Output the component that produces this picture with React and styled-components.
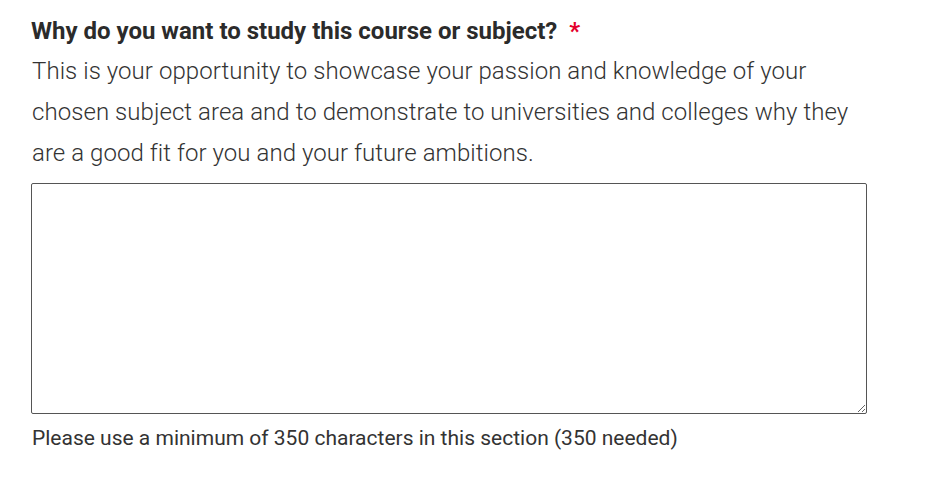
import React from "react";
import styled, { createGlobalStyle } from "styled-components";

const GlobalStyle = createGlobalStyle`
  html, body {
    margin: 0;
    padding: 0;
    background: #ffffff;
  }
  body {
    font-family: Roboto, "Liberation Sans", sans-serif;
    color: #333333;
  }
`;

const Field = styled.div`
  display: flex;
  flex-direction: column;
  padding: 16px 0 0 31px;
  width: 836px;
`;

const Label = styled.label`
  font-size: 24px;
  font-weight: 700;
  line-height: 30px;
  color: #2b2b2b;
`;

const Required = styled.span`
  color: #e4002b;
  margin-left: 12px;
`;

const Description = styled.p`
  margin: 5px 0 9px 1px;
  font-size: 24px;
  font-weight: 300;
  line-height: 41px;
  letter-spacing: 0.06px;
  color: #333333;
`;

const TextArea = styled.textarea`
  box-sizing: border-box;
  width: 836px;
  height: 231px;
  border: 1px solid #555555;
  border-radius: 2px;
  padding: 8px;
  font-family: inherit;
  font-size: 18px;
  resize: vertical;
  outline: none;
`;

const Hint = styled.div`
  margin: 11px 0 0 1px;
  font-size: 21px;
  font-weight: 400;
  line-height: 26px;
  color: #333333;
`;

const App = () => {
  return (
    <>
      <GlobalStyle />
      <Field>
        <Label>
          Why do you want to study this course or subject?
          <Required>*</Required>
        </Label>
        <Description>
          This is your opportunity to showcase your passion and knowledge of your
          chosen subject area and to demonstrate to universities and colleges why they
          are a good fit for you and your future ambitions.
        </Description>
        <TextArea />
        <Hint>Please use a minimum of 350 characters in this section (350 needed)</Hint>
      </Field>
    </>
  );
};

export default App;
